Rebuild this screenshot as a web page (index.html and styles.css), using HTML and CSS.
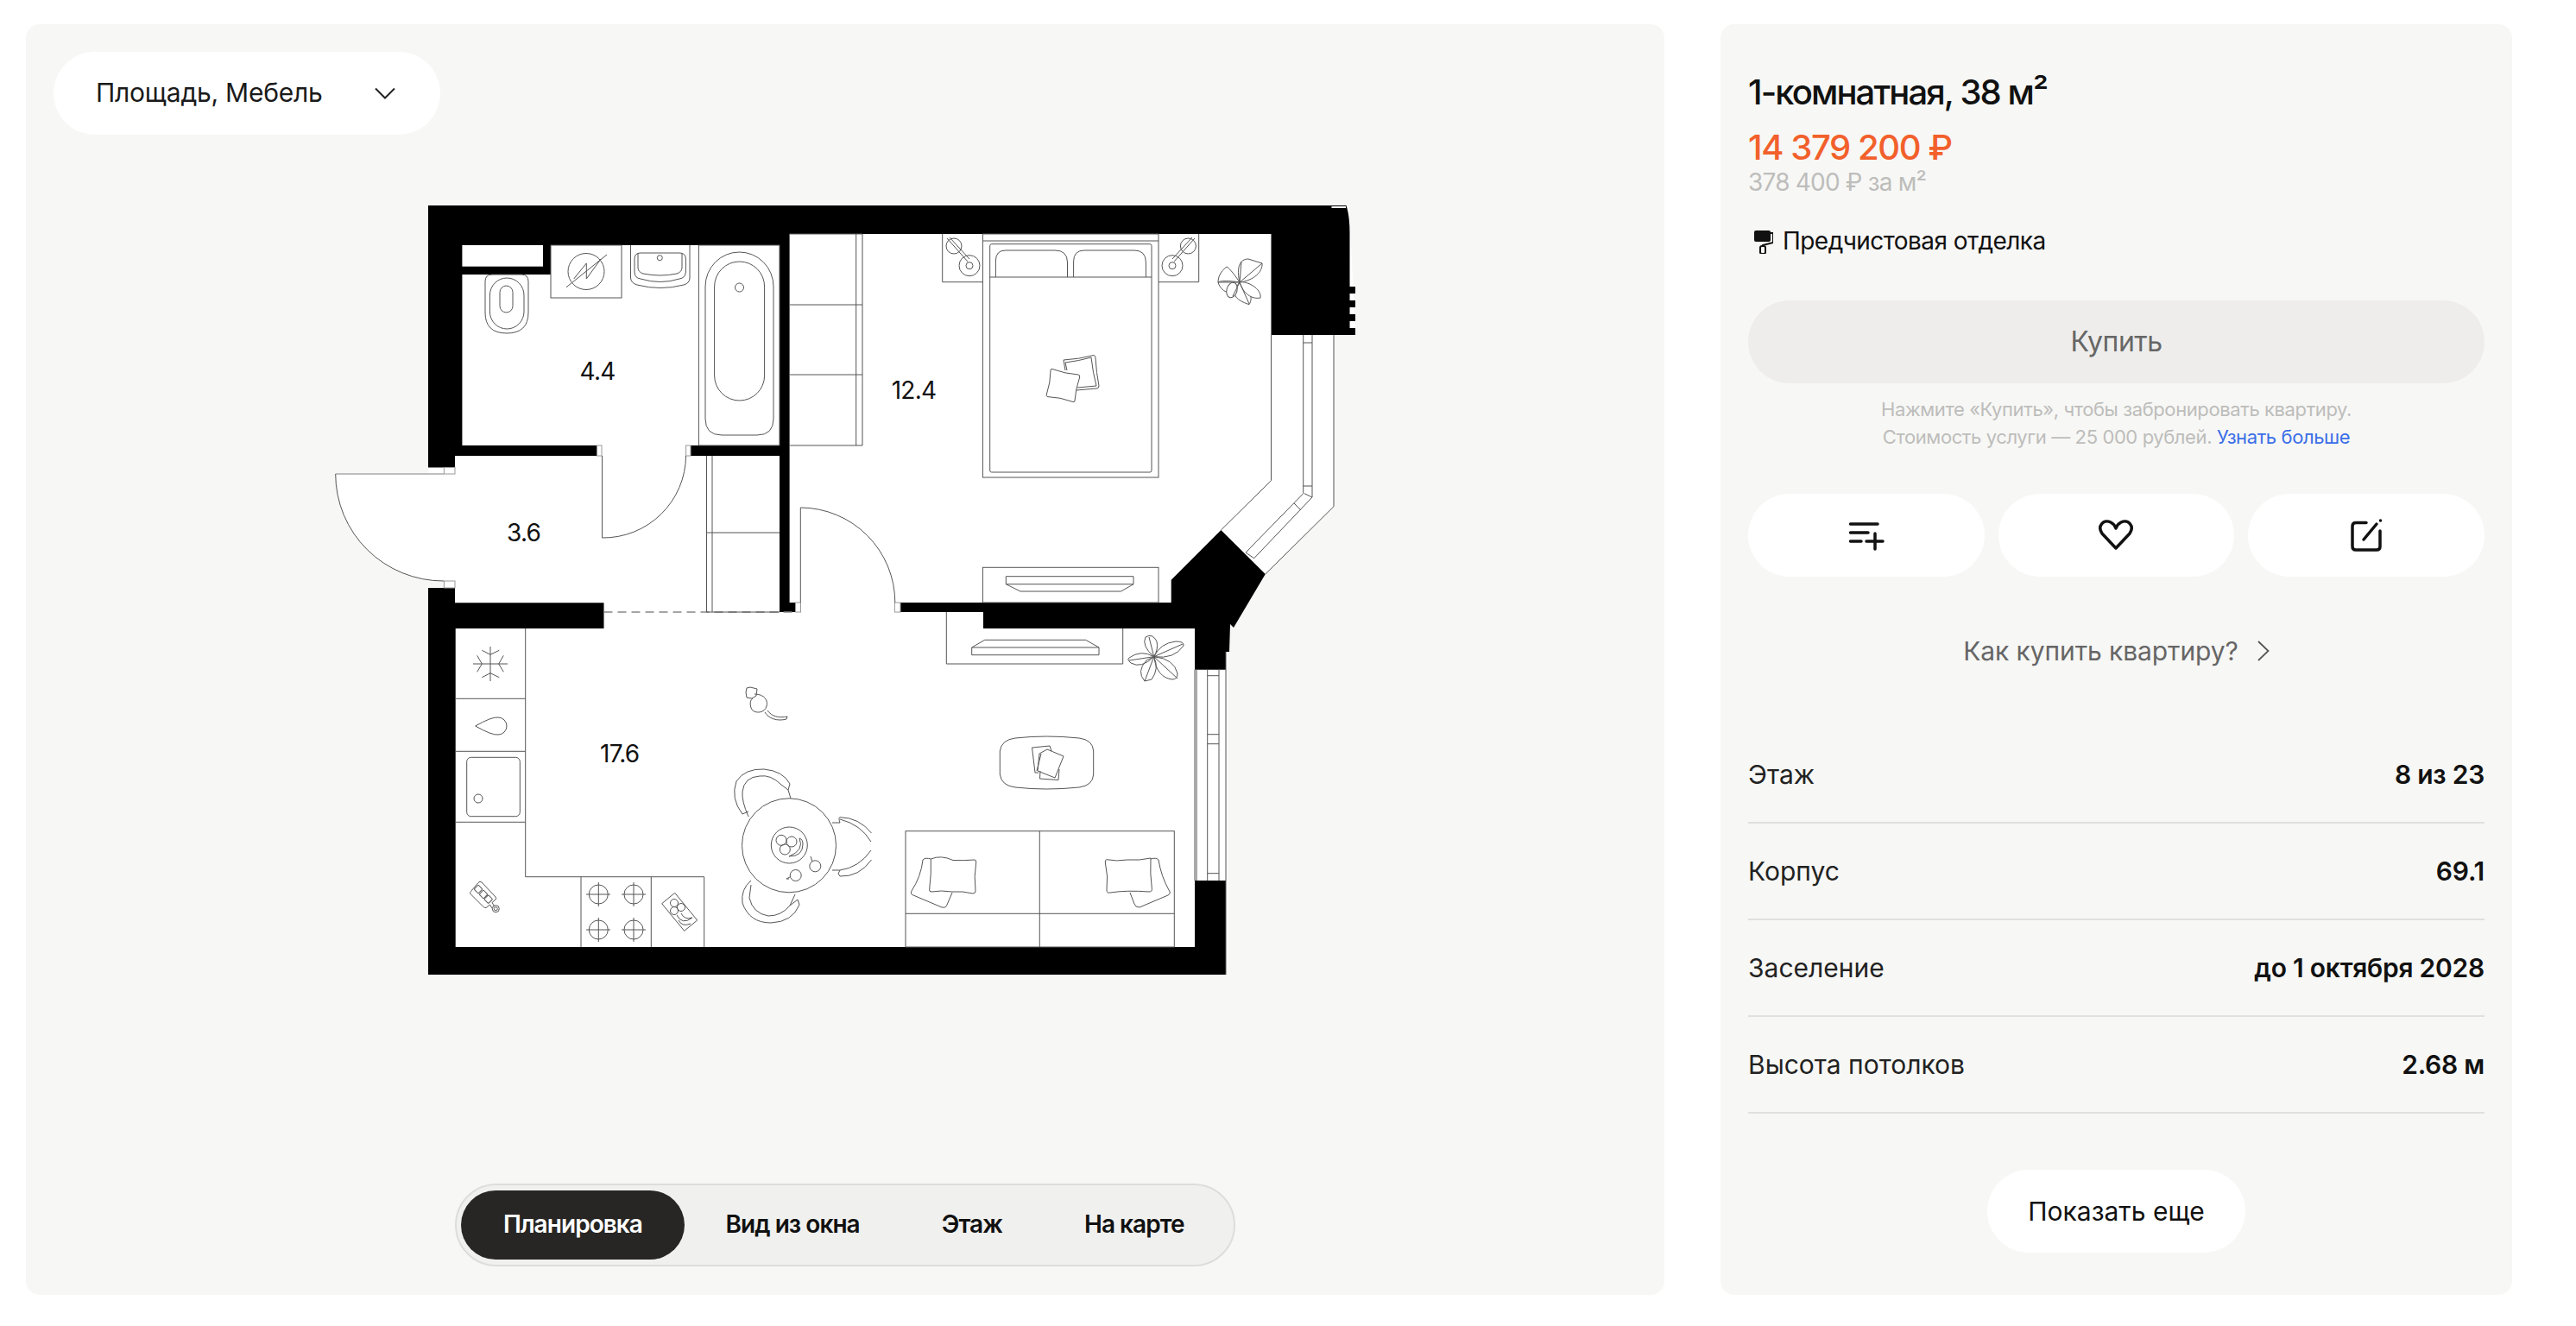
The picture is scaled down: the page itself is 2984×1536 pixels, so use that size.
FILE: index.html
```html
<!DOCTYPE html>
<html lang="ru">
<head>
<meta charset="utf-8">
<title>1-комнатная, 38 м²</title>
<link rel="stylesheet" href="styles.css">
</head>
<body>
<main class="page">
  <section class="viewer">
    <button class="select"><span>Площадь, Мебель</span>
      <svg class="select-chev" viewBox="0 0 24 14"><path d="M1 1.5 12 12.5 23 1.5"/></svg>
    </button>
    <svg class="plan" viewBox="380 220 1240 940" xmlns="http://www.w3.org/2000/svg">
      <!-- apartment floor -->
      <path class="floor" d="M496 238H1563L1570 388H1545V586.7L1465.8 665 1429 727 1424 723V755H1420V1129H496V681H514V549H496Z"/>
      <path class="floor" d="M514 549H388.7A125 124 0 0 0 514 673Z"/>
      <path class="leaf" d="M514 549H388.7"/>
      <path class="line" d="M388.7 549A125 124 0 0 0 514 673"/>

      <!-- walls -->
      <g class="wall">
        <path d="M496 238H1559.5Q1563.5 250 1563.5 270V332H1570V340H1563.5V348H1570V356H1563.5V364H1570V372H1563.5V380H1570V388H1472.5V271H914.6V698H921.5V709H903V528H800V516H903V284H638V318H535.4V516H691.6V528H527V541.5H496Z"/>
        <path d="M1043 698H1356.7V671.7L1414.4 614 1465.8 665 1429 727 1425 723 1424 755H1420V775.7H1384V728H1139V709H1043Z"/>
        <path d="M496 681H527V698.3H699.5V728H527.7V1097H1384V1020H1420V1129H496Z"/>
      </g>
      <rect class="shaft" x="535.4" y="284" width="93.6" height="24.7"/>
      <path class="line-white" d="M1542.5 240H1559"/>

      <!-- jambs -->
      <g class="jamb">
        <rect x="514.4" y="541.5" width="12.6" height="7.5"/>
        <rect x="514.4" y="673" width="12.6" height="8"/>
        <rect x="691.6" y="516" width="5.4" height="12"/>
        <rect x="794.6" y="516" width="5.4" height="12"/>
        <rect x="921.5" y="698" width="6" height="11"/>
        <rect x="1036.4" y="698" width="6.6" height="11"/>
      </g>

      <!-- doors, dashed threshold -->
      <g class="line">
        <path d="M697.5 528V623A96 96 0 0 0 794.6 528"/>
        <path d="M927.3 698V588A110 110 0 0 1 1036.8 698"/>
      </g>
      <path class="dash" d="M699.5 709H918"/>

      <!-- bathroom -->
      <g class="line">
        <rect x="638" y="284" width="82" height="61"/>
        <ellipse cx="679" cy="314.5" rx="21" ry="21"/>
        <path d="M656 332.7 703 295M664.700 323 679.300 305V323L696 300"/>
        <path d="M730.5 284V322Q731 328 738 330 765 337 792 330 799 328 799 322V284"/>
        <path d="M735 300Q735 293 742 293H787Q794.400 293 794.400 300V315Q794 322 787 323 765 330 742 323 735 322 735 315Z"/>
        <path d="M739 293V310Q739 315 745 317 765 321 784 317 790 315 790 310V293"/>
        <circle cx="764.3" cy="298.7" r="3"/>
        <rect x="809.4" y="284" width="93.6" height="232"/>
        <path d="M817 332A39.5 40 0 0 1 896 332V485Q896 504 877 504H836Q817 504 817 485Z"/>
        <rect x="827.6" y="303" width="58" height="161" rx="29" ry="29"/>
        <circle cx="856.5" cy="333" r="5"/>
        <path d="M562 326Q562 318 570 318H604Q612 318 612 326V362Q612 386 587 386T562 362Z"/>
        <rect x="567.4" y="322" width="39.6" height="59" rx="19.8" ry="20"/>
        <rect x="579" y="331" width="15" height="31" rx="7.5"/>
      </g>

      <!-- hall wardrobe, bedroom wardrobe -->
      <g class="line">
        <path d="M818.5 528V709H903M825 528V709M818.5 617H903"/>
        <path d="M914.6 271H999V516H914.6M991.7 271V516M914.6 353H999M914.6 434H999"/>
      </g>

      <!-- bedroom -->
      <g class="line">
        <rect x="1138.4" y="271" width="203.6" height="282"/>
        <path d="M1138.4 279H1342"/>
        <rect x="1146.7" y="282.7" width="187.3" height="264.3" rx="2"/>
        <path d="M1146.7 321H1334"/>
        <path d="M1153.4 321V302Q1153.4 290 1165 290H1222Q1236.5 290 1236.5 304V321M1243.6 321V303Q1243.6 290 1256 290H1314Q1327.4 290 1327.4 304V321"/>
        <path d="M1091.7 271V326.7H1138.4M1342 326.7H1388.7V271"/>
        <circle cx="1123" cy="307.7" r="12"/>
        <circle cx="1123" cy="307.7" r="4"/>
        <circle cx="1105" cy="285" r="9"/>
        <path d="M1097 276 1121 303M1100 275 1123 300"/>
        <circle cx="1358" cy="307.7" r="12"/>
        <circle cx="1358" cy="307.7" r="4"/>
        <circle cx="1376.4" cy="285" r="9"/>
        <path d="M1384 276 1360 303M1381 275 1358 300"/>
        <path d="M1234 429 1232 417Q1250 416 1266 411.7 1269 411 1269 415 1270 432 1273 447 1273 450 1270 450L1247 452"/>
        <path d="M1236 429 1234 420Q1250 418 1264 414 1266 432 1270 447L1248 449"/>
        <path d="M1219 427.500Q1234 433 1249 434 1251 434 1250.700 437 1246 450 1245 464 1245 466 1243 465.500 1228 460 1213 459.500 1212 459 1212.300 457 1217 443 1217 429 1217 427 1219 427.500Z"/>
        <!-- bedroom plant -->
        <g class="plant">
          <path d="M1436 327C1428 315 1423 310 1421 309 1413 315 1411 322 1411 327 1420 335 1430 332 1436 327Z"/>
          <path d="M1436 327C1425 325 1413 325 1411 327 1415 340 1430 345 1436 327Z"/>
          <path d="M1436 327C1432 310 1436 300 1446 300L1462 305C1463 315 1452 325 1436 327Z"/>
          <path d="M1436 327C1425 340 1430 347 1447 352.700 1452 345 1448 335 1436 327Z"/>
          <path d="M1436 327C1445 325 1462 335 1460 345 1450 347 1440 340 1436 327Z"/>
          <ellipse cx="1427" cy="336" rx="6" ry="9" transform="rotate(15 1427 336)"/>
          <path d="M1436 327 1462 305M1436 327 1411 327M1436 327 1447 352M1436 327 1428 343M1436 327 1438 303"/>
        </g>
        <rect x="1138.4" y="657.3" width="203.6" height="40.7"/>
        <path d="M1165.3 667.7H1313V676.7L1298.5 685H1182L1165.3 676.7ZM1165.3 676.7H1313"/>
      </g>

      <!-- loggia windows -->
      <g class="line">
        <path d="M1472.5 388V556.7L1414.4 614M1545 388V586.7L1465.8 665"/>
        <path d="M1509.7 388V571.7L1443 640M1520 388V576L1452.7 646.7"/>
        <path d="M1509.7 397H1520M1509.7 563H1520M1511 571.7 1520 576M1499 583 1507 591M1443 640 1452.7 646.7"/>
        <path d="M1384 775.7V1020M1386 775.7V1020M1398.7 775.7V1020M1412 775.7V1020M1420 755V1129"/>
        <path d="M1398.7 782.7H1412M1398.7 850.7H1412M1398.7 861.7H1412M1398.7 1011.7H1412"/>
      </g>

      <!-- kitchen -->
      <g class="line">
        <path d="M608.7 728V1015.7H815.7V1097M527.7 809.3H608.7M527.7 870.3H608.7M527.7 952.3H608.7M673 1015.7V1097M754.3 1015.7V1097"/>
        <path d="M568 749V789M548 769H588"/>
        <path d="M558.300 753.300 568 758.300 578.300 753.300M558.300 784.700 568 779.700 578.300 784.700M552.700 759.300 558.300 769 552.700 778.300M583.300 759.300 577.700 769 583.300 778.300"/>
        <path d="M550.7 841Q570 830 577 831A10 10 0 0 1 577 851Q570 852 550.7 841Z"/>
        <rect x="540.7" y="877.3" width="61.6" height="68.4" rx="5"/>
        <circle cx="554" cy="925" r="5"/>
        <path d="M554 1022.500Q556 1020 558 1022L574 1039Q575.500 1041 574 1042L570 1045.500 572.500 1049.500M570 1052 567.500 1048 563 1051.500Q561.500 1052 560 1050.500L545 1035.500Q544 1033.500 545.500 1032.500L554 1022.500"/>
        <rect x="550.5" y="1026.500" width="7" height="7" rx="1" transform="rotate(45 554 1030)"/>
        <rect x="556.5" y="1032.500" width="7" height="7" rx="1" transform="rotate(45 560 1036)"/>
        <rect x="562.200" y="1038.200" width="7" height="7" rx="1" transform="rotate(45 565.700 1041.700)"/>
        <circle cx="574.3" cy="1052.7" r="4"/>
        <circle cx="574.3" cy="1052.7" r="2"/>
        <g>
          <circle cx="693.3" cy="1036" r="11"/><path d="M693.3 1022V1050M679 1036H707"/>
          <circle cx="734" cy="1036" r="11"/><path d="M734 1022V1050M720 1036H748"/>
          <circle cx="693.3" cy="1077" r="11"/><path d="M693.3 1063V1091M679 1077H707"/>
          <circle cx="734" cy="1077" r="11"/><path d="M734 1063V1091M720 1077H748"/>
        </g>
        <path d="M781.7 1034.3 807.7 1066 792.7 1078.3 766.7 1046.7Z"/>
        <circle cx="781" cy="1046" r="4.5"/><circle cx="789" cy="1051" r="4.5"/><circle cx="781" cy="1055" r="4.5"/>
        <path d="M784 1060Q790 1072 802 1063 793 1066 789 1058M786 1066Q790 1074 800 1070"/>
        <!-- cat -->
        <path d="M865 797 869 796 873 797 877 798 876 806 871 809 865 808 864 802Z"/>
        <path d="M874 804C886 804 890 812 888 818 886 826 875 827 871 822 868 817 869 810 872 809"/>
        <path d="M889 823C894 830 902 832 912 830L911 833C900 836 890 832 886 825"/>
        <!-- table and chairs -->
        <path d="M867 940 860 943Q846 925 853 905 863 890 885 891 907 893 915 908L913 915 905 909Q893 897 880 899 862 900 860 917 859 928 867 946M913 915 916 925"/>
        <path d="M870 1020Q858 1030 860 1046 868 1069 893 1069 918 1068 926 1048L924 1042 915 1049Q905 1061 890 1061 872 1058 868 1040L870 1025M921 1036 915 1049"/>
        <path d="M964 953H973Q971 947 973 946.7 995 947 1009.5 965M964 1008 973 1008 971 1012 973 1015Q995 1016 1009.5 996"/>
        <path d="M973 949Q997 955 1009 975M973 1008Q995 1005 1009 985"/>
        <circle class="tablec" cx="914" cy="979.3" r="54.5"/>
        <circle cx="914.3" cy="979" r="21"/>
        <circle cx="905" cy="973.3" r="6"/><circle cx="917" cy="975" r="6"/><circle cx="909.3" cy="984" r="6"/>
        <path d="M926 971Q932 985 914 992 930 992 930 978 930 972 926 971Z"/>
        <circle cx="944.3" cy="1003.3" r="6.5"/><path d="M941 998 939 992"/>
        <circle cx="921.7" cy="1014" r="6.5"/><path d="M915 1016 911 1018 914 1018"/>
      </g>

      <!-- living -->
      <g class="line">
        <path d="M1096.3 709V769H1300.7V728"/>
        <path d="M1125.7 750H1273V758.7H1125.7ZM1125.7 750 1140.7 741.3H1257.7L1273 750"/>
        <g>
          <path d="M1336.7 760.7Q1322 748 1327 738 1335 733 1340 743 1342 752 1336.7 760.7Z"/>
          <path d="M1336.7 760.7Q1344 745 1362 743 1372 743 1371 748 1360 764 1336.7 760.7Z"/>
          <path d="M1336.7 760.7Q1360 763 1364 780 1364 787 1358 787 1340 785 1336.7 760.7Z"/>
          <path d="M1336.7 760.7Q1343 775 1334 787L1326 789Q1316 778 1328 765Z"/>
          <path d="M1336.7 760.7Q1322 775 1310 768 1305 764 1308 762 1322 752 1336.7 760.7Z"/>
          <path d="M1336.7 760.7 1331 738M1336.7 760.7 1370 746M1336.7 760.7 1364 786M1336.7 760.7 1326 789M1336.7 760.7 1308 765"/>
        </g>
        <path d="M1176 855Q1212 851 1250 855 1266 857 1266.7 870V897Q1266 910 1250 912 1212 916 1176 912 1160 910 1158.3 897V870Q1160 857 1176 855Z"/>
        <path d="M1195.5 866 1216 864 1218 870M1195.5 866 1199 895 1203 895M1204 873 1213 868 1232 876 1222 901 1202 893ZM1206 873 1201 893M1205 893 1204.5 902 1226 903.5 1227 891"/>
        <rect x="1049" y="962.7" width="311.3" height="134.3"/>
        <path d="M1204.3 962.7V1097M1049 1058.3H1360.3"/>
        <path d="M1078.3 995Q1090 990 1104 996.5 1116 997 1129 996 1131 996 1130.7 999 1128 1015 1130 1032 1130 1035 1127 1035 1115 1032 1103 1033 1090 1031 1079 1033 1076 1033 1076.7 1030 1079 1012 1078.3 995Z"/>
        <path d="M1078.3 995Q1072 993 1069 996 1067 1015 1056 1032 1054 1036 1058 1037L1091 1051Q1096 1052 1097 1048L1103 1034"/>
        <path d="M1333 994Q1320 997 1306 996 1293 998 1282 995.7 1280 996 1280.3 999 1284 1015 1282 1031 1282 1035 1286 1034 1305 1031 1331 1033 1335 1033 1334.3 1029 1332 1012 1333 994Z"/>
        <path d="M1333 995Q1339 993 1342 996 1345 1015 1354 1031 1357 1035 1353 1037L1320 1051Q1315 1051 1314 1047L1309 1034"/>
      </g>

      <!-- room areas -->
      <g class="area">
        <text x="692" y="440">4.4</text>
        <text x="606.6" y="627">3.6</text>
        <text x="1058.5" y="462">12.4</text>
        <text x="717.7" y="883">17.6</text>
      </g>
    </svg>
    <nav class="tabs">
      <a class="tab tab-active">Планировка</a>
      <a class="tab">Вид из окна</a>
      <a class="tab">Этаж</a>
      <a class="tab">На карте</a>
    </nav>
  </section>

  <aside class="info">
    <h1 class="title">1-комнатная, 38 м²</h1>
    <div class="price">14 379 200 ₽</div>
    <div class="price-sub">378 400 ₽ за м²</div>
    <div class="finish">
      <svg class="finish-icon" viewBox="0 0 24 28"><path d="M2 3Q2 1 4 1H19Q21 1 21 3V12Q21 14 19 14H4Q2 14 2 12Z" fill="#111"/><path d="M21 4H24V15L12 18V20" fill="none" stroke="#111" stroke-width="2"/><rect x="9" y="19" width="6" height="9" rx="2" fill="none" stroke="#111" stroke-width="2"/></svg>
      <span>Предчистовая отделка</span>
    </div>
    <button class="buy">Купить</button>
    <p class="note">Нажмите «Купить», чтобы забронировать квартиру.<br>Стоимость услуги — 25 000 рублей. <a class="more">Узнать больше</a></p>
    <div class="actions">
      <button class="action"><svg viewBox="0 0 40 34" class="ic ic-list"><path d="M1.500 4H33M1.500 14H22M1.500 24H14M30 15V33M20 24H39"/></svg></button>
      <button class="action"><svg viewBox="0 0 42 34" class="ic ic-heart"><path d="M21 32 5 15C-1 6 7-2 15 2 18 3.500 20 6 21 9 22 6 24 3.500 27 2 35-2 43 6 37 15Z"/></svg></button>
      <button class="action"><svg viewBox="0 0 36 36" class="ic ic-edit"><path d="M18 3.500H6Q2 3.500 2 7.500V31Q2 35 6 35H30Q34 35 34 31V13M15 23 30 5"/><circle cx="34.500" cy="1" r="1.800" class="ic-dot"/></svg></button>
    </div>
    <a class="how"><span>Как купить квартиру?</span><svg class="how-chev" viewBox="0 0 14 24"><path d="M1 1 12.500 12 1 23"/></svg></a>
    <dl class="specs">
      <div class="spec"><dt>Этаж</dt><dd>8 из 23</dd></div>
      <div class="spec"><dt>Корпус</dt><dd>69.1</dd></div>
      <div class="spec"><dt>Заселение</dt><dd>до 1 октября 2028</dd></div>
      <div class="spec"><dt>Высота потолков</dt><dd>2.68 м</dd></div>
    </dl>
    <button class="show-more">Показать еще</button>
  </aside>
</main>
</body>
</html>
```
FILE: styles.css
```css
* { box-sizing: border-box; }
html, body { margin: 0; padding: 0; background: #fff; }
body { font-family: Inter, "Liberation Sans", sans-serif; color: #111; }
button { font: inherit; border: 0; cursor: pointer; }

.page {
  display: grid;
  grid-template-columns: 1898px 917px;
  column-gap: 65px;
  padding: 28px 30px 0;
  height: 1536px;
}
.viewer, .info {
  height: 1472px;
  background: #f7f7f5;
  border-radius: 16px;
}
.viewer {
  display: flex;
  flex-direction: column;
  padding: 32px;
}
.select {
  align-self: flex-start;
  flex: none;
  display: flex;
  align-items: center;
  width: 448px;
  height: 96px;
  padding: 0 52px 2px 49px;
  justify-content: space-between;
  background: #fff;
  border-radius: 48px;
  font-size: 30px;
  letter-spacing: -0.25px;
  color: #1a1a1a;
}
.select-chev { width: 24px; height: 14px; fill: none; stroke: #222; stroke-width: 2; margin-top: 2px; }
.plan {
  flex: none;
  display: block;
  width: 1240px;
  height: 940px;
  margin: 64px 0 0 318px;
}
.floor { fill: #fff; }
.wall path { fill: #000; }
.shaft { fill: #fff; }
.line-white { stroke: #fff; stroke-width: 2; }
.leaf { stroke: #aaa; stroke-width: 1.5; fill: none; }
.jamb rect { fill: #fff; stroke: #999; stroke-width: 1; }
.line { fill: none; stroke: #555; stroke-width: 1; }
.plant path, .plant ellipse { fill: #fff; }
.tablec { fill: #fff; }
.dash { stroke: #888; stroke-width: 1.5; stroke-dasharray: 10 6; fill: none; }
.area text { font-size: 28px; fill: #111; text-anchor: middle; letter-spacing: -0.8px; }

.tabs {
  margin-top: auto;
  align-self: flex-start;
  margin-left: 465px;
  display: flex;
  align-items: center;
  width: 904px;
  height: 96px;
  padding: 0 5px;
  background: #f0f0ef;
  border: 2px solid #dddddb;
  border-radius: 48px;
  font-size: 28px;
  font-weight: 600;
  letter-spacing: -0.95px;
  margin-bottom: 1px;
}
.tab { display: flex; align-items: center; height: 80px; padding: 0 47.5px 2px; border-radius: 40px; color: #111; white-space: nowrap; }
.tab-active { padding: 0 49px 2px; background: #272624; color: #fff; }

.info { padding: 55px 32px 0; }
.title { margin: 0; font-size: 40px; line-height: 48px; font-weight: 500; letter-spacing: -1.9px; }
.price { margin-top: 16px; font-size: 40px; line-height: 48px; font-weight: 500; letter-spacing: -1.4px; color: #f2602b; }
.price-sub { margin-top: 0; font-size: 28px; line-height: 32px; letter-spacing: -0.8px; color: #bdbdbb; }
.finish { display: flex; align-items: center; gap: 12px; margin-top: 37px; padding-left: 5px; font-size: 28px; line-height: 32px; letter-spacing: -0.55px; }
.finish span { position: relative; top: -1px; left: -1px; }
.finish-icon { width: 24px; height: 28px; flex: none; }
.buy { display: block; width: 100%; height: 96px; margin-top: 52px; padding-bottom: 3px; border-radius: 48px; background: #eeedeb; color: #666; font-size: 32px; letter-spacing: -0.5px; }
.note { margin: 14px 0 0; text-align: center; font-size: 22px; line-height: 32px; letter-spacing: -0.4px; color: #bdbdbb; }
.more { color: #3a6ee8; }
.actions { display: grid; grid-template-columns: repeat(3, 1fr); gap: 16px; margin-top: 50px; }
.action { height: 96px; border-radius: 48px; background: #fff; display: flex; align-items: center; justify-content: center; }
.ic { fill: none; stroke: #111; stroke-width: 3.5; stroke-linecap: round; stroke-linejoin: round; overflow: visible; }
.ic-list { width: 40px; height: 34px; }
.ic-heart { width: 42px; height: 34px; }
.ic-edit { width: 36px; height: 36px; }
.ic-dot { fill: #111; stroke: none; }
.how { display: flex; align-items: center; justify-content: center; gap: 22px; height: 40px; margin-top: 66px; font-size: 30px; letter-spacing: -0.1px; color: #666; }
.how-chev { width: 14px; height: 24px; fill: none; stroke: #555; stroke-width: 1.8; }
.specs { margin: 68px 0 0; }
.spec { display: flex; justify-content: space-between; align-items: center; height: 112px; border-bottom: 2px solid #e0e0de; font-size: 30px; }
.spec dt { font-weight: 400; color: #222; }
.spec dd { margin: 0; font-weight: 600; letter-spacing: -0.25px; }
.show-more { display: block; width: 299px; height: 96px; margin: 65px auto 0; padding-bottom: 2px; border-radius: 48px; background: #fff; font-size: 30px; color: #111; }
```
